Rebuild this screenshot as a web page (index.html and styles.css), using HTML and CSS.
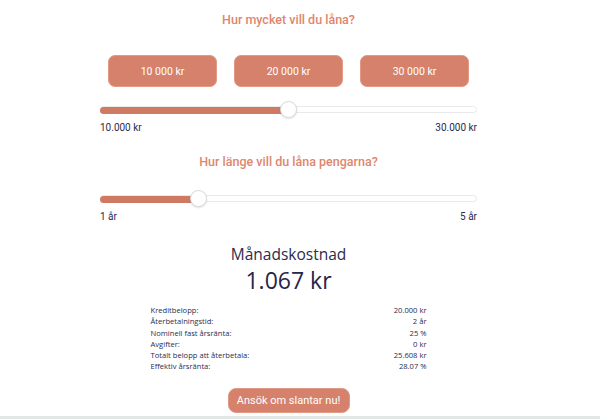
FILE: index.html
```html
<!DOCTYPE html>
<html lang="sv">
<head>
    <meta charset="UTF-8">
    <meta name="viewport" content="width=device-width, initial-scale=1.0">
    <title>Låneräknare</title>
    <link rel="stylesheet" href="styles.css">
</head>
<body>
    <main class="calculator">
        <h2 class="question">Hur mycket vill du låna?</h2>
        <div class="amount-options">
            <button type="button" class="amount-btn">10 000 kr</button>
            <button type="button" class="amount-btn">20 000 kr</button>
            <button type="button" class="amount-btn">30 000 kr</button>
        </div>

        <div class="slider" style="--value: 0.5">
            <div class="slider-fill"></div>
            <span class="slider-thumb"></span>
        </div>
        <div class="range-labels">
            <span>10.000 kr</span>
            <span>30.000 kr</span>
        </div>

        <h2 class="question question-second">Hur länge vill du låna pengarna?</h2>
        <div class="slider slider-second" style="--value: 0.25">
            <div class="slider-fill"></div>
            <span class="slider-thumb"></span>
        </div>
        <div class="range-labels">
            <span>1 år</span>
            <span>5 år</span>
        </div>

        <section class="result">
            <h3 class="result-title">Månadskostnad</h3>
            <div class="result-amount">1.067 kr</div>

            <dl class="details">
                <div class="detail-row"><dt>Kreditbelopp:</dt><dd>20.000 kr</dd></div>
                <div class="detail-row"><dt>Återbetalningstid:</dt><dd>2 år</dd></div>
                <div class="detail-row"><dt>Nominell fast årsränta:</dt><dd>25 %</dd></div>
                <div class="detail-row"><dt>Avgifter:</dt><dd>0 kr</dd></div>
                <div class="detail-row"><dt>Totalt belopp att återbetala:</dt><dd>25.608 kr</dd></div>
                <div class="detail-row"><dt>Effektiv årsränta:</dt><dd>28.07 %</dd></div>
            </dl>

            <button type="button" class="apply-btn">Ansök om slantar nu!</button>
        </section>
    </main>
    <div class="page-divider"></div>
</body>
</html>
```

FILE: styles.css
```css
body {
    font-family: Roboto, "Liberation Sans", sans-serif;
    background-color: #ffffff;
    color: #2c2b4b;
    margin: 0;
    padding: 0;
}
.calculator {
    width: 377px;
    margin-left: 100px;
    padding-top: 12px;
}
.question {
    margin: 0;
    font-size: 12.5px;
    line-height: 16px;
    font-weight: 500;
    text-align: center;
    color: #e0866c;
}
.question-second {
    margin-top: 20px;
}
.amount-options {
    display: flex;
    gap: 17px;
    padding: 0 8px;
    margin-top: 27px;
}
.amount-btn {
    flex: 1;
    height: 32px;
    border: 1px solid #e09a86;
    border-radius: 7px;
    background-color: #d5816b;
    color: #fff;
    font-family: Roboto, sans-serif;
    font-size: 10.5px;
    cursor: pointer;
}
.slider {
    position: relative;
    height: 18px;
    margin-top: 14px;
    display: flex;
    align-items: center;
}
.slider-second {
    margin-top: 20px;
}
.slider::before {
    content: "";
    position: absolute;
    left: 0;
    right: 0;
    top: 5px;
    height: 7px;
    box-sizing: border-box;
    border: 1px solid #e9e9e9;
    border-radius: 4px;
    background-color: #fff;
}
.slider-fill {
    position: relative;
    height: 7px;
    width: calc(8.5px + var(--value) * (100% - 17px));
    border-radius: 4px 0 0 4px;
    background-color: #cf7b64;
}
.slider-thumb {
    position: absolute;
    top: 0;
    left: calc(var(--value) * (100% - 17px));
    width: 17px;
    height: 17px;
    box-sizing: border-box;
    border: 1px solid #d9d9d9;
    border-radius: 50%;
    background-color: #fff;
    box-shadow: 0 1px 2px rgba(0, 0, 0, 0.12);
}
.range-labels {
    display: flex;
    justify-content: space-between;
    margin-top: 2px;
    font-size: 10px;
    line-height: 13px;
    color: #2c2b4b;
}
.result {
    text-align: center;
    font-family: "Open Sans", sans-serif;
}
.result-title {
    margin: 21px 0 0;
    font-size: 15.5px;
    line-height: 20px;
    font-weight: 400;
    color: #2c2b4b;
}
.result-amount {
    margin-top: 2px;
    font-size: 23px;
    line-height: 28px;
    font-weight: 500;
    color: #26254a;
}
.details {
    width: 276px;
    margin: 11px auto 0;
    font-size: 7.6px;
    line-height: 11.3px;
    color: #2c2b4b;
}
.detail-row {
    display: flex;
    justify-content: space-between;
}
.details dt,
.details dd {
    margin: 0;
}
.apply-btn {
    margin-top: 15px;
    width: 122px;
    height: 25px;
    border: 1px solid #e09a86;
    border-radius: 8px;
    background-color: #d5816b;
    color: #fff;
    font-family: Roboto, sans-serif;
    font-size: 11px;
    cursor: pointer;
}
.page-divider {
    margin-top: 3px;
    height: 3px;
    background-color: #e1e8e6;
}
```
